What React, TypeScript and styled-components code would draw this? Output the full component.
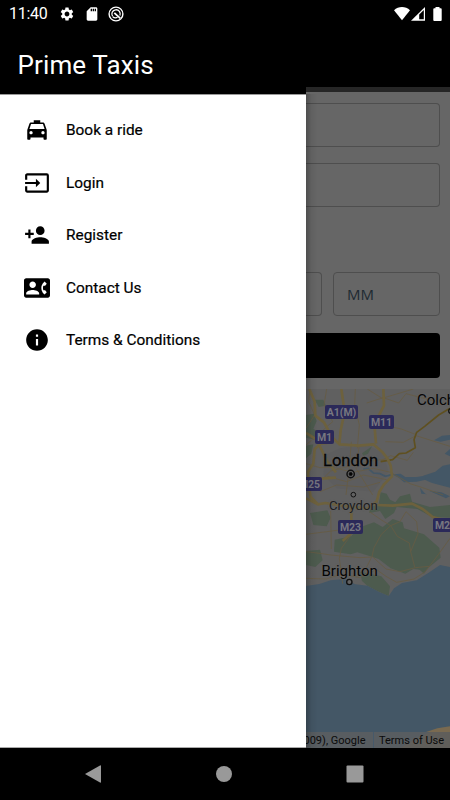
import React from 'react';
import styled, { createGlobalStyle } from 'styled-components';
import { MdLocalTaxi, MdInput, MdPersonAdd, MdContactPhone, MdInfo, MdSettings, MdSdCard } from 'react-icons/md';

const GlobalStyle = createGlobalStyle`
  * { box-sizing: border-box; }
  body { margin: 0; background: #000; font-family: Roboto, sans-serif; }
`;

const Screen = styled.div`
  display: flex;
  flex-direction: column;
  width: 450px;
  height: 800px;
  overflow: hidden;
  background: #000;
`;

const StatusBar = styled.header`
  display: flex;
  align-items: center;
  justify-content: space-between;
  height: 27px;
  padding: 0 8px 0 9px;
  color: #fff;
`;

const StatusGroup = styled.div<{ $gap: number }>`
  display: flex;
  align-items: center;
  gap: ${(p) => p.$gap}px;
`;

const Clock = styled.span`
  width: 42px;
  font-size: 16px;
  line-height: 28px;
  letter-spacing: -0.3px;
  white-space: nowrap;
`;

const Body = styled.div`
  display: flex;
  height: 721px;
`;

const Drawer = styled.aside`
  display: flex;
  flex-direction: column;
  width: 306px;
  background: #fff;
  border-bottom: 1px solid #aaa;
`;

const DrawerHeader = styled.div`
  height: 68px;
  padding: 22px 17.5px 0;
  background: #000;
  border-bottom: 1px solid #999;
  color: #fff;
`;

const Title = styled.h1`
  margin: 0;
  font-size: 26px;
  line-height: 32px;
  font-weight: 400;
  letter-spacing: 0.13px;
`;

const Menu = styled.nav`
  display: flex;
  flex-direction: column;
  padding-top: 9px;
`;

const MenuItem = styled.a`
  display: flex;
  align-items: center;
  gap: 16px;
  height: 52.5px;
  padding-left: 24px;
  color: #000;
  font-size: 15.4px;
  font-weight: 400;
  -webkit-text-stroke: 0.2px #000;
`;

const Page = styled.main`
  position: relative;
  display: flex;
  flex-direction: column;
  width: 144px;
  background: #666;
`;

const DrawerShadow = styled.div`
  position: absolute;
  inset: 67px auto 0 0;
  width: 12px;
  background: linear-gradient(90deg, rgba(0, 0, 0, 0.24), rgba(0, 0, 0, 0.06) 45%, transparent);
`;

const AppBar = styled.div`
  height: 65px;
  background: #000;
  border-bottom: 5px solid #262626;
`;

const Form = styled.div`
  display: flex;
  flex-direction: column;
  height: 297px;
  padding: 11px 10px 0 0;
`;

const Field = styled.div<{ $gap: number }>`
  height: 44px;
  margin-bottom: ${(p) => p.$gap}px;
  border: 1px solid #4e4e4e;
  border-left: 0;
  border-radius: 0 4px 4px 0;
`;

const TimeRow = styled.div`
  display: flex;
  gap: 11px;
  height: 44px;
  margin-bottom: 17px;
`;

const HourField = styled(Field)`
  width: 16px;
  margin: 0;
`;

const MinuteField = styled.div`
  flex: 1;
  padding-left: 13px;
  border: 1px solid #4e4e4e;
  border-radius: 4px;
  color: #202a32;
  font: 15px/43px 'Open Sans', sans-serif;
`;

const SubmitButton = styled.div`
  height: 45px;
  background: #000;
  border-radius: 0 4px 4px 0;
`;

const MapView = styled.section`
  position: relative;
  height: 359px;
  overflow: hidden;
`;

const MapArt = styled.svg`
  display: block;
`;

const Place = styled.span<{ $x: number; $y: number; $size: number; $stroke?: number; $color?: string }>`
  position: absolute;
  left: ${(p) => p.$x}px;
  top: ${(p) => p.$y}px;
  color: ${(p) => p.$color ?? '#050505'};
  font-size: ${(p) => p.$size}px;
  -webkit-text-stroke: ${(p) => p.$stroke ?? 0}px currentColor;
  line-height: 20px;
  white-space: nowrap;
  text-shadow: 0 0 2px #666, 0 0 1px #666;
`;

const RoadBadge = styled.span<{ $x: number; $y: number; $w: number }>`
  position: absolute;
  left: ${(p) => p.$x}px;
  top: ${(p) => p.$y}px;
  width: ${(p) => p.$w}px;
  height: 14px;
  border-radius: 2px;
  background: #2b2959;
  color: #777780;
  font-size: 10.5px;
  font-weight: 700;
  line-height: 15px;
  text-align: center;
`;

const Attribution = styled.footer`
  position: absolute;
  inset: auto 0 0 0;
  display: flex;
  height: 16px;
  background: rgba(96, 96, 96, 0.72);
  color: #0b0b0b;
  font-size: 11px;
  line-height: 17px;
  white-space: nowrap;
`;

const Credit = styled.span`
  display: flex;
  justify-content: flex-end;
  width: 68px;
  padding-right: 7.5px;
  border-right: 1px solid #46596a;
  overflow: hidden;
`;

const Terms = styled.span`
  padding-left: 5px;
`;

const NavBar = styled.footer`
  display: flex;
  justify-content: space-between;
  height: 52px;
  padding: 17px 86px 0 84px;
  color: #999;
`;

const MENU = [
  { label: 'Book a ride', Icon: MdLocalTaxi },
  { label: 'Login', Icon: MdInput },
  { label: 'Register', Icon: MdPersonAdd },
  { label: 'Contact Us', Icon: MdContactPhone },
  { label: 'Terms & Conditions', Icon: MdInfo },
];

function NoSyncIcon() {
  return (
    <svg width="16" height="16" viewBox="0 0 16 16" fill="none" stroke="#fff">
      <circle cx="8" cy="8" r="6.900" strokeWidth="1.400" />
      <path d="M4.600 10.400A4.200 4.200 0 1 1 11.900 9.600" strokeWidth="1.300" />
      <path d="M6.300 6.800 12.300 12.300" strokeWidth="1.800" />
      <path d="M4.800 10.900q2.400 1.700 4.700.4" strokeWidth="1.300" />
    </svg>
  );
}

function SignalIcons() {
  return (
    <svg width="49" height="16" viewBox="0 0 49 16" fill="#fff">
      <path d="M1 4.200C5.500-.2 12.500-.2 17 4.200L9 14.200Z" />
      <path d="M18 14.700 32 1v13.700Z" />
      <path d="M26.200 8.600 30.800 4.100v9.200h-4.600Z" fill="#000" />
      <path d="M42.500 1h4v1.300h1.300q.9 0 .9.900v10.900q0 .9-.9.900h-6.600q-.9 0-.9-.9V3.200q0-.9.900-.9h1.300Z" />
    </svg>
  );
}

function MapBackground() {
  return (
    <MapArt width="144" height="359" viewBox="18 12 432 1077">
      <rect x="18" y="12" width="432" height="1077" fill="#606060" />
      <path d="M120 190 200 180 250 204 266 260 220 320 110 310 70 270 76 210Z" fill="#5d5d5e" />
      <g fill="#4d5b4e">
        <path d="M18 90 42 86 50 108 40 132 60 142 44 164 18 158ZM18 182 40 178 34 206 18 220ZM44 44 70 44 78 62 56 66ZM186 205 216 184 204 206 190 212Z" />
        <path d="M242 322 260 326 270 344 286 352 300 334 330 326 336 350 390 366 450 360V398L396 396 352 372 290 366 282 384 256 402 240 378 208 384 210 366 236 358Z" />
        <path d="M30 384 82 376 92 398 80 424 40 420Z" />
        <path d="M104 464 154 454 172 430 222 412 248 426 278 402 308 412 312 430 372 448 418 488 422 518 376 556 340 552 316 566 272 550 236 522 206 512 172 502 152 508 102 500Z" />
        <path d="M18 498 60 494 68 526 46 546 18 540ZM180 560 244 574 270 604 266 633 236 620 202 602 186 588Z" />
        <path d="M354 550 388 542 372 566Z" />
      </g>
      <g fill="#445766">
        <path d="M18 603 58 597 92 586 132 582 166 598 202 602 236 620 266 633 282 610 306 594 350 586 388 562 420 540 450 546V1089H18Z" />
        <path d="M450 238 428 242 406 260 370 272 374 284 396 294 450 308ZM450 150 426 152 402 166 422 170 450 164ZM450 192 434 206 450 214Z" />
        <path d="M276 268 302 266 316 276 350 276 374 272 378 284 350 290 312 292 296 278ZM360 308 376 326 382 328 364 326ZM388 318 424 322 450 334 438 340Z" />
      </g>
      <path d="M378 1041 412 1030 450 1024V1041Z" fill="#7a6a50" />
      <path d="M300 1089 350 1060 390 1041H450V1089Z" fill="#62594e" />
      <path d="M190 252 204 250 220 264 240 266 256 274 278 268" fill="none" stroke="#445766" strokeWidth="5" />
      <g fill="none" stroke="#665c43" strokeWidth="2.500" strokeLinejoin="round">
        <path d="M30 12 26 50 44 90 18 130M80 12 72 60 98 110 18 180M166 12 164 60 178 120 172 190M202 12 246 40 300 24 340 12M200 54 250 38 296 54 318 26 450 60M240 118 304 132 346 148M256 170 310 172 348 152 450 184M242 228 272 212 322 226 340 202M36 312 92 258 160 240 214 228 258 222M18 236 60 248 110 246M110 250 160 262 220 250 272 262M154 170 148 246 138 330M178 180 168 250 218 330M82 274 140 290 190 270 260 284M60 320 110 300 190 306 240 292M272 262 330 296 368 308 430 330" />
        <path d="M92 378 94 492M154 370 150 454 124 490 118 520 128 596M272 422 244 448 222 488 216 514 190 566M216 514 258 552 300 560 346 548 388 544M272 422 300 410 318 380M272 422 292 454 328 474 332 500 344 546M318 380 350 410 354 446 332 500M18 500 66 506 92 510 180 518 214 516M18 580 80 582 124 566 178 578 230 554 258 574 290 592 342 582 376 560 414 510 450 460M208 380 246 406 272 422M18 448 96 438 154 430" />
      </g>
      <path
        d="M450 70 416 90 374 124 350 142 342 164 346 188 318 204 298 206 278 224 242 230"
        fill="none"
        stroke="#5f5020"
        strokeWidth="5"
        strokeLinejoin="round"
      />
      <g fill="none" stroke="#6d613d" strokeWidth="8" strokeLinejoin="round">
        <path d="M28 12 44 50 46 92 72 112 96 156 118 178 176 182 220 178 246 200 262 220 272 242 276 274 252 298 238 320 230 350 204 370 160 366 112 360 76 354 54 358 32 336 26 300 24 260 40 236 44 192 62 176 94 172" />
        <path d="M124 12 134 80 122 136 118 178M250 12 252 62 232 100 224 130 228 176M18 284 108 278M154 366 154 444 128 468M230 360 278 362 336 356 368 372 398 396 450 410M18 340 54 358M18 144 50 164 82 230 108 262" />
      </g>
      <g fill="#626262" stroke="#101010">
        <circle cx="152" cy="267" r="11" strokeWidth="4.500" />
        <circle cx="152" cy="267" r="5" strokeWidth="2" fill="#050505" />
        <circle cx="160" cy="329" r="7" strokeWidth="3" />
        <circle cx="148" cy="591" r="8" strokeWidth="4" />
        <circle cx="453" cy="78" r="7" strokeWidth="4" />
      </g>
    </MapArt>
  );
}

export default function App() {
  return (
    <>
      <GlobalStyle />
      <Screen>
        <StatusBar>
          <StatusGroup $gap={8.3}>
            <Clock>11:40</Clock>
            <MdSettings size={16} />
            <MdSdCard size={16} />
            <NoSyncIcon />
          </StatusGroup>
          <SignalIcons />
        </StatusBar>
        <Body>
          <Drawer>
            <DrawerHeader>
              <Title>Prime Taxis</Title>
            </DrawerHeader>
            <Menu>
              {MENU.map(({ label, Icon }) => (
                <MenuItem key={label}>
                  <Icon size={26} />
                  {label}
                </MenuItem>
              ))}
            </Menu>
          </Drawer>
          <Page>
            <AppBar />
            <Form>
              <Field $gap={16} />
              <Field $gap={65} />
              <TimeRow>
                <HourField $gap={0} />
                <MinuteField>MM</MinuteField>
              </TimeRow>
              <SubmitButton />
            </Form>
            <MapView>
              <MapBackground />
              <Place $x={111} $y={0.5} $size={15}>Colchester</Place>
              <Place $x={17} $y={62} $size={16.5} $stroke={0.3}>London</Place>
              <Place $x={23} $y={106.5} $size={13.2} $color="#1c1c1c">Croydon</Place>
              <Place $x={15.5} $y={172} $size={15}>Brighton</Place>
              <RoadBadge $x={19} $y={16} $w={33}>A1(M)</RoadBadge>
              <RoadBadge $x={63} $y={26} $w={25}>M11</RoadBadge>
              <RoadBadge $x={9} $y={41} $w={19}>M1</RoadBadge>
              <RoadBadge $x={-9} $y={88} $w={25}>M25</RoadBadge>
              <RoadBadge $x={32} $y={131} $w={25}>M23</RoadBadge>
              <RoadBadge $x={127} $y={129} $w={25}>M20</RoadBadge>
              <Attribution>
                <Credit>Map data (©2009), Google</Credit>
                <Terms>Terms of Use</Terms>
              </Attribution>
            </MapView>
            <DrawerShadow />
          </Page>
        </Body>
        <NavBar>
          <svg width="18" height="18" viewBox="0 0 18 18" fill="currentColor">
            <path d="M1 9 16 .500q1-.5 1 .5v16q0 1-1 .5Z" />
          </svg>
          <svg width="18" height="18" viewBox="0 0 18 18" fill="currentColor">
            <circle cx="9" cy="9" r="8" />
          </svg>
          <svg width="18" height="18" viewBox="0 0 18 18" fill="currentColor">
            <rect x=".5" y=".5" width="17" height="17" rx="1" />
          </svg>
        </NavBar>
      </Screen>
    </>
  );
}
